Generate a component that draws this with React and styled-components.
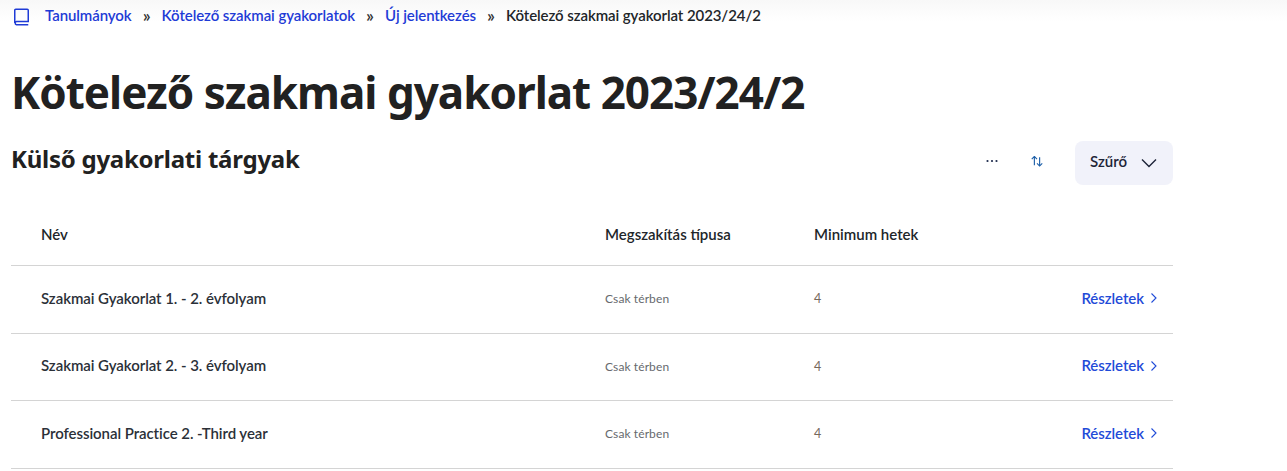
import React from "react";
import styled, { createGlobalStyle } from "styled-components";

const Global = createGlobalStyle`
  html, body { margin: 0; padding: 0; overflow: hidden; }
  body {
    font-family: "Lato", sans-serif;
    color: #212529;
    background: linear-gradient(#f8f8f8, #fff 22px) no-repeat #fff;
  }
`;
const Page = styled.div`
  width: 1173px;
  padding-left: 11px;
  box-sizing: border-box;
  height: 471px;
  overflow: hidden;
`;
const Crumbs = styled.nav`
  display: flex;
  align-items: center;
  height: 30px;
  font-size: 15px;
  font-weight: 600;
  letter-spacing: -0.08px;
  padding-left: 2px;
`;
const CrumbLink = styled.a`
  color: #1f3bd6;
  text-decoration: none;
`;
const CrumbCurrent = styled.span`
  color: #212529;
`;
const Sep = styled.span`
  color: #333;
  font-size: 18px;
  line-height: 18px;
  width: 30px;
  text-align: center;
`;
const BookIcon = styled.svg`
  width: 18px;
  height: 18px;
  margin: 3px 14px 0 0;
  color: #1f3bd6;
`;
const Title = styled.h1`
  margin: 34px 0 0;
  font-family: "Noto Sans", sans-serif;
  font-size: 44px;
  line-height: 56px;
  font-weight: 700;
  letter-spacing: -1px;
  color: #212121;
`;
const SectionBar = styled.div`
  display: flex;
  align-items: center;
  justify-content: space-between;
  height: 44px;
  margin-top: 21px;
`;
const Subtitle = styled.h2`
  margin: 0 0 10px;
  font-family: "Noto Sans", sans-serif;
  font-size: 24px;
  font-weight: 700;
  letter-spacing: -0.25px;
  color: #212121;
`;
const Tools = styled.div`
  display: flex;
  align-items: center;
`;
const IconBtn = styled.button`
  border: 0;
  background: none;
  padding: 0;
  width: 45px;
  height: 44px;
  display: flex;
  align-items: center;
  justify-content: center;
  color: #1d2a4d;
`;
const FilterBtn = styled.button`
  margin-left: 16px;
  width: 98px;
  height: 44px;
  border: 0;
  border-radius: 8px;
  background: #f1f2fa;
  color: #1d2438;
  font: 600 15px "Lato", sans-serif;
  display: flex;
  align-items: center;
  justify-content: space-between;
  padding: 0 16px 0 15px;
`;
const FilterLabel = styled.span`
  margin-bottom: 4px;
`;
const Row = styled.div`
  display: grid;
  grid-template-columns: 564px 209px 1fr auto;
  align-items: center;
  height: ${p => p.$h}px;
  padding: ${p => p.$top}px 15px ${p => p.$bottom}px 30px;
  border-bottom: 1px solid #d4d4d4;
  box-sizing: border-box;
`;
const Head = styled.span`
  font-size: 15px;
  font-weight: 600;
  color: #212529;
`;
const Name = styled.span`
  font-size: 15px;
  font-weight: 600;
  letter-spacing: -0.06px;
  color: #2b3038;
`;
const Small = styled.span`
  font-size: 12px;
  letter-spacing: 0.1px;
  margin-top: 2px;
  color: #66696e;
`;
const Count = styled.span`
  font-size: 12.5px;
  margin-top: 2px;
  color: #75685c;
`;
const Details = styled.a`
  display: flex;
  align-items: center;
  gap: 6px;
  font-size: 15px;
  font-weight: 600;
  letter-spacing: -0.06px;
  color: #1f4bd8;
`;
const DetailsArrow = styled.svg`
  margin-top: 1px;
`;
const Table = styled.div`
  margin-top: 13px;
`;

const rows = [
  "Szakmai Gyakorlat 1. - 2. évfolyam",
  "Szakmai Gyakorlat 2. - 3. évfolyam",
  "Professional Practice 2. -Third year",
];

export default function App() {
  return (
    <Page>
      <Global />
      <Crumbs>
        <BookIcon viewBox="0 0 18 18" fill="none" stroke="currentColor" strokeWidth="1.500">
          <path d="M1.750 15V2.250a1 1 0 0 1 1-1h11.500a1 1 0 0 1 1 1V13.500H3.500a1.700 1.700 0 0 0 0 3.300H15.250" />
        </BookIcon>
        <CrumbLink>Tanulmányok</CrumbLink>
        <Sep>»</Sep>
        <CrumbLink>Kötelező szakmai gyakorlatok</CrumbLink>
        <Sep>»</Sep>
        <CrumbLink>Új jelentkezés</CrumbLink>
        <Sep>»</Sep>
        <CrumbCurrent>Kötelező szakmai gyakorlat 2023/24/2</CrumbCurrent>
      </Crumbs>
      <Title>Kötelező szakmai gyakorlat 2023/24/2</Title>
      <SectionBar>
        <Subtitle>Külső gyakorlati tárgyak</Subtitle>
        <Tools>
          <IconBtn aria-label="Több">
            <svg width="14" height="14" viewBox="0 0 14 14" fill="currentColor">
              <circle cx="2.500" cy="5" r="1.100" /><circle cx="7" cy="5" r="1.100" /><circle cx="11.500" cy="5" r="1.100" />
            </svg>
          </IconBtn>
          <IconBtn aria-label="Rendezés">
            <svg width="14" height="14" viewBox="0 0 16 16" fill="none" stroke="#1d5fa8" strokeWidth="1.300">
              <path d="M5 10.500V0.500M2 3.500l3-3 3 3" /><path d="M11 1.500v10M8 8.500l3 3 3-3" />
            </svg>
          </IconBtn>
          <FilterBtn>
            <FilterLabel>Szűrő</FilterLabel>
            <svg width="16" height="10" viewBox="0 0 16 10" fill="none" stroke="currentColor" strokeWidth="1.400">
              <path d="M1 1.500l7 7 7-7" />
            </svg>
          </FilterBtn>
        </Tools>
      </SectionBar>
      <Table>
        <Row $h={68} $top={4} $bottom={0}>
          <Head>Név</Head>
          <Head>Megszakítás típusa</Head>
          <Head>Minimum hetek</Head>
          <span />
        </Row>
        {rows.map(r => (
          <Row $h={67.500} $top={0} $bottom={3} key={r}>
            <Name>{r}</Name>
            <Small>Csak térben</Small>
            <Count>4</Count>
            <Details>
              Részletek
              <DetailsArrow width="8" height="12" viewBox="0 0 8 12" fill="none" stroke="currentColor" strokeWidth="1.100">
                <path d="M1.500 1.500L6 6l-4.500 4.500" />
              </DetailsArrow>
            </Details>
          </Row>
        ))}
      </Table>
    </Page>
  );
}
